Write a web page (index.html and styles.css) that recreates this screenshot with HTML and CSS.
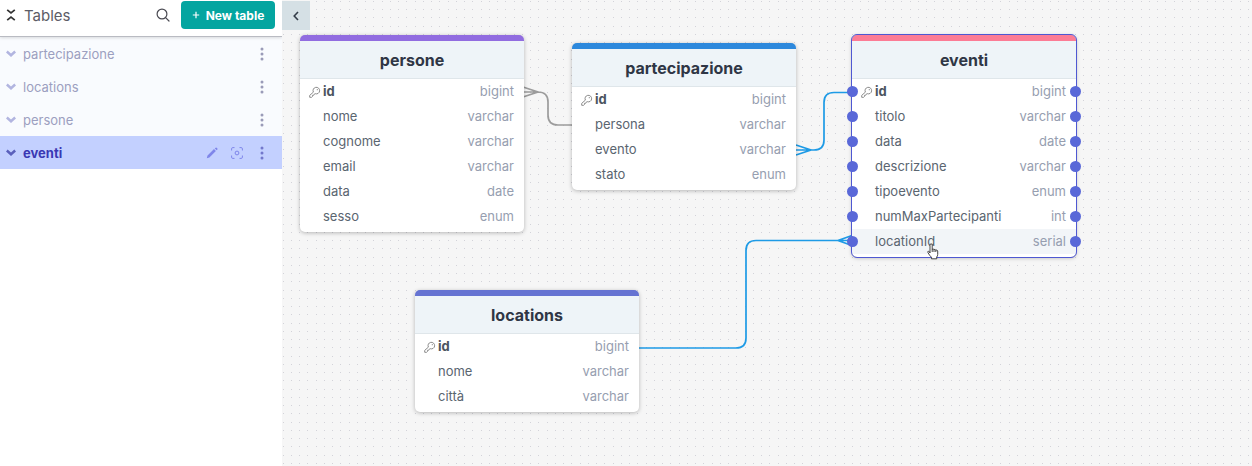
FILE: index.html
```html
<!DOCTYPE html>
<html lang="en">
<head>
<meta charset="utf-8">
<meta name="viewport" content="width=device-width, initial-scale=1">
<title>Tables</title>
<link rel="stylesheet" href="styles.css">
</head>
<body>
<svg class="defs" aria-hidden="true">
  <symbol id="chevron" viewBox="0 0 10 7"><path d="M.8 1.500 5 5.200 9.200 1.500" fill="none" stroke="currentColor" stroke-width="2.600"/></symbol>
  <symbol id="more" viewBox="0 0 4 14"><circle cx="2" cy="2" r="1.5"/><circle cx="2" cy="7" r="1.5"/><circle cx="2" cy="12" r="1.5"/></symbol>
  <symbol id="key" viewBox="0 0 12 12"><path d="M4.4 6.1A3.3 3.3 0 1 1 6.2 7.7L5.2 8.2 4.7 9.3H3.5V10.5L2.6 11.3H.7V9.4Z" fill="none" stroke="currentColor" stroke-linejoin="round"/><circle cx="8.3" cy="3.7" r=".6"/></symbol>
</svg>
<div class="app">
  <aside class="sidebar">
    <header class="sidebar-head">
      <button class="icon-btn collapse-all" aria-label="Collapse all"><svg width="10" height="12" viewBox="0 0 10 12"><path d="M1.2.8 5 4 8.8.8M1.2 11.2 5 8l3.8 3.2" fill="none" stroke="currentColor" stroke-width="1.7"/></svg></button>
      <h1 class="title">Tables</h1>
      <button class="icon-btn search" aria-label="Search"><svg width="14" height="14" viewBox="0 0 14 14"><g fill="none" stroke="currentColor" stroke-width="1.2" stroke-linecap="round"><circle cx="6" cy="6" r="4.9"/><path d="m9.6 9.6 3.4 3.4"/></g></svg></button>
      <button class="new-table"><svg width="8" height="8" viewBox="0 0 8 8" aria-hidden="true"><path d="M4 .8v6.4M.8 4h6.4" stroke="currentColor" stroke-width="1.2"/></svg>New table</button>
    </header>
    <ul class="table-list">
      <li class="item"><button class="item-name"><svg class="chev"><use href="#chevron"/></svg>partecipazione</button><button class="icon-btn" aria-label="More"><svg class="more"><use href="#more"/></svg></button></li>
      <li class="item"><button class="item-name"><svg class="chev"><use href="#chevron"/></svg>locations</button><button class="icon-btn" aria-label="More"><svg class="more"><use href="#more"/></svg></button></li>
      <li class="item"><button class="item-name"><svg class="chev"><use href="#chevron"/></svg>persone</button><button class="icon-btn" aria-label="More"><svg class="more"><use href="#more"/></svg></button></li>
      <li class="item selected"><button class="item-name"><svg class="chev"><use href="#chevron"/></svg>eventi</button>
        <button class="icon-btn" aria-label="Edit"><svg width="12" height="12" viewBox="0 0 12 12"><path d="M.8 11.2 1.5 8.6 8 2.1l1.9 1.9-6.5 6.5ZM8.8 1.4l.8-.7q.5-.4 1 0l.8.8q.4.5 0 1l-.7.8Z" fill="currentColor"/></svg></button>
        <button class="icon-btn" aria-label="Focus"><svg width="12" height="12" viewBox="0 0 12 12"><g fill="none" stroke="currentColor"><path d="M.6 3.5V1.8Q.6.6 1.8.6h1.7M8.5.6h1.7q1.2 0 1.2 1.2v1.7M11.4 8.5v1.7q0 1.2-1.2 1.2H8.5M3.5 11.4H1.8Q.6 11.4.6 10.2V8.5"/><circle cx="6" cy="6" r="1.9"/></g></svg></button>
        <button class="icon-btn" aria-label="More"><svg class="more"><use href="#more"/></svg></button></li>
    </ul>
  </aside>
  <main class="canvas">
    <svg class="layer" aria-hidden="true">
      <defs><pattern id="dots" x="9" y="1" width="33" height="33" patternUnits="userSpaceOnUse"><path d="M0 .5H33M0 8.5H33M0 16.5H33M0 25.5H33" stroke="#d3d3d9" stroke-dasharray="1 7 1 7 1 8 1 7"/></pattern></defs>
      <rect width="100%" height="100%" fill="url(#dots)"/>
      <g fill="none" stroke-width="1.7">
        <path stroke="#9c9c9c" d="M241 87l15 5-15 5M241 92h15q10 0 10 10v13q0 10 10 10h15"/>
        <path stroke="#1e9be6" d="M514 145l15 5-15 5M514 150h18q10 0 10-10v-37.500q0-10 10-10h18"/>
        <path stroke="#1e9be6" d="M356 348h98q10 0 10-10v-87.500q0-10 10-10h96M570 235.500l-14 5 14 5"/>
      </g>
    </svg>
    <button class="toggle" aria-label="Hide sidebar"><svg width="6" height="10" viewBox="0 0 6 10"><path d="M5 1 1.200 5 5 9" fill="none" stroke="currentColor" stroke-width="1.600"/></svg></button>

    <section class="node persone">
      <h2 class="node-title">persone</h2>
      <table class="fields">
        <tr><th scope="row" class="pk"><svg class="key"><use href="#key"/></svg>id</th><td>bigint</td></tr>
        <tr><th scope="row">nome</th><td>varchar</td></tr>
        <tr><th scope="row">cognome</th><td>varchar</td></tr>
        <tr><th scope="row">email</th><td>varchar</td></tr>
        <tr><th scope="row">data</th><td>date</td></tr>
        <tr><th scope="row">sesso</th><td>enum</td></tr>
      </table>
    </section>

    <section class="node partecipazione">
      <h2 class="node-title">partecipazione</h2>
      <table class="fields">
        <tr><th scope="row" class="pk"><svg class="key"><use href="#key"/></svg>id</th><td>bigint</td></tr>
        <tr><th scope="row">persona</th><td>varchar</td></tr>
        <tr><th scope="row">evento</th><td>varchar</td></tr>
        <tr><th scope="row">stato</th><td>enum</td></tr>
      </table>
    </section>

    <section class="node locations">
      <h2 class="node-title">locations</h2>
      <table class="fields">
        <tr><th scope="row" class="pk"><svg class="key"><use href="#key"/></svg>id</th><td>bigint</td></tr>
        <tr><th scope="row">nome</th><td>varchar</td></tr>
        <tr><th scope="row">città</th><td>varchar</td></tr>
      </table>
    </section>

    <section class="node eventi active">
      <h2 class="node-title">eventi</h2>
      <table class="fields">
        <tr><th scope="row" class="pk"><svg class="key"><use href="#key"/></svg>id</th><td>bigint</td></tr>
        <tr><th scope="row">titolo</th><td>varchar</td></tr>
        <tr><th scope="row">data</th><td>date</td></tr>
        <tr><th scope="row">descrizione</th><td>varchar</td></tr>
        <tr><th scope="row">tipoevento</th><td>enum</td></tr>
        <tr><th scope="row">numMaxPartecipanti</th><td>int</td></tr>
        <tr class="hover"><th scope="row">locationId</th><td>serial</td></tr>
      </table>
    </section>

    <svg class="cursor" width="12" height="17" viewBox="0 0 12 17" aria-hidden="true"><path d="M3 10V2.200Q3 .8 4.100.8t1.100 1.400v4Q6.200 5.600 7 6.600q1-.5 1.700.4 1.500-.4 2 1v3.500q0 1.500-1 2.500v1.800H4.500v-1.500Q2.500 12.500 1 9.700q-.6-1.200.3-1.500T3 10ZM5.200 6v3M7 6.800V9M8.800 7.200V9" fill="#fff" stroke="#333" stroke-width=".9" stroke-linejoin="round"/></svg>
  </main>
</div>
</body>
</html>
```

FILE: styles.css
```css
* { box-sizing: border-box; }
body { margin: 0; font-family: Inter, "Liberation Sans", sans-serif; font-size: 13px; color: #5b6470; }
button { border: 0; padding: 0; background: none; font: inherit; color: inherit; cursor: pointer; }
svg { display: block; flex: none; }
.defs { position: absolute; width: 0; height: 0; }
.app { display: flex; min-height: 100vh; }

.sidebar { flex: none; width: 282px; background: #fff; }
.sidebar-head { position: relative; display: flex; align-items: center; height: 37px; padding: 0 7px 6px 6px; border-bottom: 1px solid #b9bbc2; box-shadow: 0 1px 3px #0002; }
.collapse-all { color: #333; }
.title { flex: 1; margin: 0 0 0 8px; font-size: 15px; font-weight: 400; color: #5c5c66; }
.search { margin-right: 11px; color: #4a4a52; }
.new-table { display: flex; align-items: center; justify-content: center; gap: 6px; width: 94px; height: 28px; border-radius: 4px; background: #04a5a0; color: #fff; font-size: 12px; font-weight: 700; white-space: nowrap; }

.table-list { margin: 0; padding: 0; list-style: none; }
.item { display: flex; align-items: center; gap: 12px; height: 33px; padding: 0 14px 0 6px; background: #f9fbfe; color: #9c9fc0; }
.item .icon-btn { display: grid; place-items: center; width: 13px; }
.item-name { display: flex; flex: 1; align-items: center; gap: 7px; text-align: left; }
.chev { width: 10px; height: 7px; color: #b2b5e0; }
.more { width: 4px; height: 14px; fill: #9a9bb8; }
.selected { background: #c3d0ff; color: #7f86ea; }
.selected .item-name { color: #3a38b4; font-weight: 700; }
.selected .chev { color: #5a60bc; }
.selected .more { fill: #7378cc; }

.canvas { position: relative; flex: 1; min-width: 0; overflow: hidden; background: #f6f6f6; }
.layer { position: absolute; inset: 0; width: 100%; height: 100%; }
.toggle { position: absolute; left: 0; top: 1px; display: grid; place-items: center; width: 28px; height: 29px; background: #d5e0e5; color: #333c48; }

.node { position: absolute; width: 224px; padding-bottom: 3px; border-top: 6px solid var(--accent); border-radius: 5px; background: #fff; box-shadow: 0 1px 4px #0004; }
.persone { --accent: #916ce0; left: 18px; top: 35px; }
.partecipazione { --accent: #2c88dc; left: 290px; top: 43px; }
.locations { --accent: #6573d2; left: 133px; top: 290px; }
.eventi { --accent: #fc7c95; left: 570px; top: 35px; }
.active { outline: 1px solid #4f58d2; }
.node-title { margin: 0; padding-top: 2px; border-bottom: 1px solid #dfe6ea; background: #eef4f8; font-size: 16px; line-height: 35px; font-weight: 700; text-align: center; color: #2f3645; }
.fields { width: 100%; border-collapse: collapse; line-height: 25px; }
.fields th, .fields td { padding: 0; font-weight: 400; }
.fields th { position: relative; padding-left: 23px; text-align: left; color: #5a6570; }
.fields td { position: relative; padding-right: 10px; text-align: right; color: #969eb0; }
.fields .pk { font-weight: 700; color: #4c5560; }
.key { position: absolute; left: 9px; top: 7px; width: 12px; height: 12px; color: #8a8a8a; fill: #8a8a8a; }
.hover { background: #f2f5f8; }
.active th::before, .active td::before { content: ""; position: absolute; top: 7px; width: 11px; height: 11px; border-radius: 50%; background: #5968d8; }
.active th::before { left: -5px; }
.active td::before { right: -5px; }
.cursor { position: absolute; left: 645px; top: 243px; }
```
